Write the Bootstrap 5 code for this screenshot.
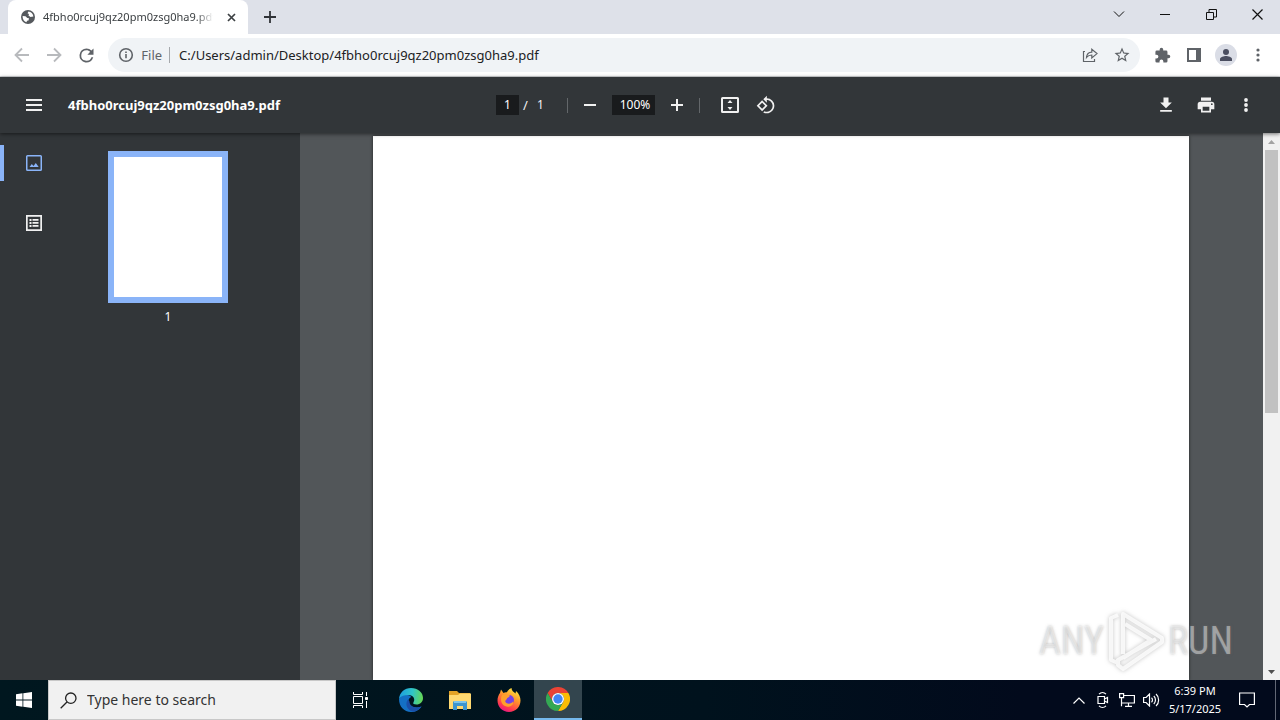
<!DOCTYPE html>
<html lang="en">
<head>
<meta charset="utf-8">
<meta name="viewport" content="width=device-width, initial-scale=1">
<title>4fbho0rcuj9qz20pm0zsg0ha9.pdf</title>
<link href="https://cdn.jsdelivr.net/npm/bootstrap@5.3.0/dist/css/bootstrap.min.css" rel="stylesheet">
<style>
  body { font-family: "Noto Sans", "Open Sans", sans-serif; font-size: 13px; line-height: 20px; background: #323639; }
  svg { display: block; flex: none; fill: currentColor; }
  .line { fill: none; stroke: currentColor; }
  .tool { display: flex; align-items: center; justify-content: center; flex: none; padding: 0; border: 0; border-radius: 0; background: none; color: inherit; }
  .w-tab { width: 240px; height: 34px; border-radius: 8px 8px 0 0; background: #fff; color: #3c4043; font-size: 11px; padding-left: 13px; }
  .tab-title { width: 174px; white-space: nowrap; -webkit-mask-image: linear-gradient(90deg, #000 88%, transparent 98%); mask-image: linear-gradient(90deg, #000 88%, transparent 98%); }
  .tab-close { width: 20px; height: 20px; margin-left: 4px; }
  .tab-new { width: 28px; color: #303338; }
  .tabstrip { background: #dee1e9; height: 34px; }
  .win { width: 46px; height: 28px; color: #111; }
  .chrome-bar { height: 43px; padding: 0 8px; gap: 4px; background: #fff; border-bottom: 1px solid #d5d7da; color: #5f6368; }
  .chrome-bar .tool { width: 28px; height: 28px; }
  .chrome-bar .faded { color: #b8babd; }
  .omnibox { height: 34px; border-radius: 17px; background: #f0f3f6; margin: 0 4px; }
  .omnibox input { border: 0; background: none; color: #202124; outline: 0; padding: 0; min-width: 0; }
  .file-label { border-right: 1px solid #a5a8ac; line-height: 16px; padding-right: 7px; margin-right: 9px; }
  .avatar { width: 22px; height: 22px; border-radius: 50%; background: #dadde6; color: #4a4e60; }
  .pdf-bar { display: grid; grid-template-columns: 1fr auto 1fr; align-items: center; height: 56px; background: #323639; color: #f1f1f1; box-shadow: 0 1px 4px rgba(0,0,0,.55); z-index: 2; position: relative; }
  .pdf-bar .tool { width: 36px; height: 36px; }
  .pdf-bar .wide { padding-right: 14px; }
  .pdf-bar .wide .tool { width: 40px; }
  .pdf-name { font-size: 13px; font-weight: 700; color: #fff; }
  .field { height: 20px; border: 0; padding: 0; background: #191b1d; color: #fff; text-align: center; font-size: 12px; outline: 0; }
  .page-field { width: 23px; }
  .zoom-field { width: 43px; padding-left: 3px; }
  .slash { width: 14px; }
  .page-total { width: 30px; font-size: 12px; }
  .rule { width: 1px; height: 15px; background: #63676a; }
  .rail { width: 68px; padding-top: 12px; gap: 24px; color: #f1f1f1; }
  .rail .tool { width: 68px; height: 36px; }
  .rail .active { color: #8ab4f8; border-left: 4px solid #8ab4f8; padding-right: 4px; border-radius: 0 3px 3px 0; }
  .side { width: 300px; background: #323639; color: #fff; }
  .thumbs { width: 200px; padding-top: 18px; font-size: 12px; }
  .thumb { width: 120px; height: 152px; border: 6px solid #8ab4f8; background: #fff; border-radius: 0; padding: 0; }
  .canvas-area { background: #525659; padding: 3px 1px 0 0; }
  .sheet { width: 816px; max-width: 100%; background: #fff; box-shadow: 0 0 3px rgba(0,0,0,.6); }
  .scroller { width: 17px; background: #f1f1f1; }
  .scroller .tool { width: 17px; height: 17px; }
  .thumb-bar { width: 13px; height: 48%; background: #c1c1c1; }
  .up { color: #a3a3a3; }
  .down { color: #505050; }
  .brand-mark { right: 47px; bottom: 6px; gap: 3px; height: 66px; color: rgba(255,255,255,.42); font: 400 38px/66px "Liberation Sans Narrow", "Roboto Condensed", sans-serif; text-shadow: 0 0 3px rgba(120,120,120,.5); }
  .brand-mark svg { color: rgba(255,255,255,.8); filter: drop-shadow(0 0 2px rgba(110,110,110,.5)); }
  .taskbar { height: 40px; background: linear-gradient(90deg, #00171f, #00121d 55%, #020a1c 80%); color: #fff; }
  .taskbar .tool { width: 48px; height: 40px; }
  .taskbar .tray .tool { width: 24px; }
  .taskbar .tray .notice { width: 40px; }
  .taskbar .running { background: #33454e; border-bottom: 2px solid #76b9ed; }
  .apps { gap: 1px; margin-left: 3px; }
  .search { width: 288px; height: 40px; background: #f1f1f1; border: 1px solid #c8c8c8; color: #222; padding-left: 11px; }
  .search input { border: 0; background: none; outline: 0; font-size: 14px; padding: 0; min-width: 0; margin-left: 10px; }
  .search input::placeholder { color: #333; opacity: 1; }
  .clock { width: 64px; font-size: 11px; line-height: 18px; }
  .desk-edge { width: 5px; height: 40px; border-left: 1px solid #626875; margin-left: 8px; }
</style>
</head>
<body class="d-flex flex-column vh-100 overflow-hidden">

<header>
  <div class="tabstrip d-flex">
    <div class="w-tab d-flex align-items-center ms-2 flex-shrink-0">
      <svg class="me-2" width="14" height="14" viewBox="0 0 14 14"><circle cx="7" cy="7" r="7" fill="#55595d"/><path fill="#fff" d="M1.600 6 4.500 6.300 6.300 8 8 8.300 7.500 10.500 6 10.800 5.500 12.200C3.300 11.600 1.400 9.500 1.600 6ZM7.500 1.600 6.500 3.200 8 4 7.500 5.600 9.500 7 12.400 6.500C12 3.600 10 1.700 7.500 1.600Z"/></svg>
      <span class="tab-title">4fbho0rcuj9qz20pm0zsg0ha9.pdf</span>
      <button class="tool tab-close" aria-label="Close tab"><svg class="line" width="9" height="9" viewBox="0 0 9 9" stroke-width="1.700"><path d="m1 1 7 7M8 1 1 8"/></svg></button>
    </div>
    <button class="tool tab-new ms-2" aria-label="New tab"><svg class="line" width="12" height="12" viewBox="0 0 12 12" stroke-width="1.800"><path d="M6 0v12M0 6h12"/></svg></button>
    <div class="d-flex ms-auto">
      <button class="tool win" aria-label="Search tabs"><svg class="line" width="12" height="8" viewBox="0 0 12 8"><path d="m1 1.500 5 5 5-5"/></svg></button>
      <button class="tool win" aria-label="Minimize"><svg width="10" height="1"><path d="M0 0h10v1H0z"/></svg></button>
      <button class="tool win" aria-label="Restore"><svg class="line" width="11" height="11" viewBox="0 0 11 11"><path d="M.5 3.500h7v7h-7zM3 3V.5h7.500V8H8"/></svg></button>
      <button class="tool win" aria-label="Close"><svg class="line" width="11" height="11" viewBox="0 0 11 11" stroke-width="1.200"><path d="m.5.5 10 10M10.500.5l-10 10"/></svg></button>
    </div>
  </div>

  <div class="chrome-bar d-flex align-items-center">
    <button class="tool faded" aria-label="Back"><svg class="line" width="16" height="16" viewBox="0 0 16 16" stroke-width="1.800"><path d="M15 8H2M8 1.500 1.500 8 8 14.500"/></svg></button>
    <button class="tool faded" aria-label="Forward"><svg class="line" width="16" height="16" viewBox="0 0 16 16" stroke-width="1.800"><path d="M1 8h13M8 1.500 14.500 8 8 14.500"/></svg></button>
    <button class="tool" aria-label="Reload"><svg width="21" height="21" viewBox="0 0 24 24"><path d="M17.650 6.350A7.960 7.960 0 0 0 12 4a8 8 0 1 0 7.730 10h-2.080A6 6 0 1 1 12 6c1.660 0 3.140.69 4.220 1.780L13 11h7V4z"/></svg></button>
    <div class="omnibox d-flex align-items-center flex-grow-1">
      <svg class="line ms-2" width="20" height="20" viewBox="0 0 20 20" stroke-width="1.600"><circle cx="10" cy="10" r="6.300"/><path d="M10 9v4.200M10 6.400V8" /></svg>
      <label for="url" class="file-label ms-1">&hairsp;File</label>
      <input id="url" class="flex-grow-1" value="C:/Users/admin/Desktop/4fbho0rcuj9qz20pm0zsg0ha9.pdf">
      <button class="tool me-1" aria-label="Share"><svg class="line" width="16" height="16" viewBox="0 0 16 16" stroke-width="1.200"><path d="M3 4.500H1.500v10h11V12M4.500 10.500C4.800 7 6.500 5.200 9.800 5.100V2.200L15 6.600 9.800 11V8C7.500 8 6 8.600 4.500 10.500Z"/></svg></button>
      <button class="tool me-1" aria-label="Bookmark"><svg width="18" height="18" viewBox="0 0 24 24"><path d="m22 9.240-7.190-.62L12 2 9.190 8.630 2 9.240l5.460 4.730L5.820 21 12 17.270 18.180 21l-1.630-7.030zM12 15.400l-3.760 2.270 1-4.280-3.320-2.880 4.380-.38L12 6.100l1.710 4.040 4.380.38-3.320 2.880 1 4.280z"/></svg></button>
    </div>
    <button class="tool" aria-label="Extensions"><svg width="17" height="17" viewBox="0 0 24 24"><path d="M20.500 11H19V7a2 2 0 0 0-2-2h-4V3.500a2.500 2.500 0 0 0-5 0V5H4a2 2 0 0 0-2 2v3.800h1.500a2.700 2.700 0 0 1 0 5.400H2V20a2 2 0 0 0 2 2h3.800v-1.500a2.700 2.700 0 0 1 5.400 0V22H17a2 2 0 0 0 2-2v-4h1.500a2.500 2.500 0 0 0 0-5"/></svg></button>
    <button class="tool" aria-label="Side panel"><svg width="14" height="14" viewBox="0 0 14 14"><path fill-rule="evenodd" d="M0 0h14v14H0zM2 2v10h7V2z"/></svg></button>
    <button class="tool" aria-label="Profile"><span class="avatar d-flex align-items-center justify-content-center"><svg width="12" height="12" viewBox="0 0 12 12"><circle cx="6" cy="3" r="3"/><path d="M0 12v-2c0-2 4-3 6-3s6 1 6 3v2z"/></svg></span></button>
    <button class="tool" aria-label="Menu"><svg width="4" height="14" viewBox="0 0 4 14"><circle cx="2" cy="2" r="1.600"/><circle cx="2" cy="7" r="1.600"/><circle cx="2" cy="12" r="1.600"/></svg></button>
  </div>
</header>

<div class="pdf-bar">
  <div class="d-flex align-items-center ps-3">
    <button class="tool" aria-label="Toggle sidebar"><svg width="16" height="12" viewBox="0 0 16 12"><path d="M0 0h16v2H0zM0 5h16v2H0zM0 10h16v2H0z"/></svg></button>
    <span class="pdf-name ms-3">4fbho0rcuj9qz20pm0zsg0ha9.pdf</span>
  </div>
  <div class="d-flex align-items-center">
    <input class="field page-field" value="1" aria-label="Page number">
    <span class="slash ms-1">/</span><span class="page-total">1</span>
    <span class="rule"></span>
    <button class="tool ms-1" aria-label="Zoom out"><svg width="12" height="2"><path d="M0 0h12v2H0z"/></svg></button>
    <input class="field zoom-field mx-1" value="100%" aria-label="Zoom level">
    <button class="tool me-1" aria-label="Zoom in"><svg width="12" height="12"><path d="M5 0h2v5h5v2H7v5H5V7H0V5h5z"/></svg></button>
    <span class="rule me-2"></span>
    <button class="tool ms-1" aria-label="Fit to page"><svg width="18" height="16" viewBox="0 0 18 16"><path fill-rule="evenodd" d="M1.500 0h15A1.500 1.500 0 0 1 18 1.500v13a1.500 1.500 0 0 1-1.500 1.500h-15A1.500 1.500 0 0 1 0 14.500v-13A1.500 1.500 0 0 1 1.500 0ZM2 2v12h14V2Zm7 1 2.500 3h-5Zm0 10-2.500-3h5Z"/></svg></button>
    <button class="tool" aria-label="Rotate"><svg width="20" height="20" viewBox="0 0 24 24"><path fill-rule="evenodd" d="M7.340 6.410.86 12.900l6.490 6.480 6.490-6.480zM3.690 12.900l3.660-3.660L11 12.900l-3.660 3.660zm15.670-6.260A8.950 8.950 0 0 0 13 4V.76L8.760 5 13 9.240V6c1.790 0 3.580.68 4.950 2.050a7.007 7.007 0 0 1 0 9.900 6.973 6.973 0 0 1-7.790 1.440l-1.490 1.490a8.990 8.990 0 0 0 10.690-14.240"/></svg></button>
  </div>
  <div class="wide d-flex justify-content-end">
    <button class="tool" aria-label="Download"><svg width="20" height="20" viewBox="0 0 24 24"><path d="M19 9h-4V3H9v6H5l7 7zM5 18v2h14v-2z"/></svg></button>
    <button class="tool" aria-label="Print"><svg width="20" height="20" viewBox="0 0 24 24"><path d="M19 8H5a3 3 0 0 0-3 3v6h4v4h12v-4h4v-6a3 3 0 0 0-3-3m-3 11H8v-5h8zm3-7a1 1 0 1 1 0-2 1 1 0 0 1 0 2m-1-9H6v4h12z"/></svg></button>
    <button class="tool" aria-label="More"><svg width="4" height="14" viewBox="0 0 4 14"><circle cx="2" cy="2" r="1.900"/><circle cx="2" cy="7" r="1.900"/><circle cx="2" cy="12" r="1.900"/></svg></button>
  </div>
</div>

<main class="d-flex flex-grow-1 position-relative overflow-hidden">
  <aside class="side d-flex flex-shrink-0">
    <nav class="rail d-flex flex-column">
      <button class="tool active" aria-label="Thumbnails"><svg width="16" height="16" viewBox="0 0 16 16"><path fill-rule="evenodd" d="M1.500 0h13A1.500 1.500 0 0 1 16 1.500v13a1.500 1.500 0 0 1-1.500 1.500h-13A1.500 1.500 0 0 1 0 14.500v-13A1.500 1.500 0 0 1 1.500 0Zm0 1.500v13h13v-13Zm2 10.500 2.300-3 1.700 2 2.300-3 2.900 4Z"/></svg></button>
      <button class="tool" aria-label="Outline"><svg width="16" height="16" viewBox="0 0 16 16"><path fill-rule="evenodd" d="M0 0h16v16H0ZM1.700 1.700v12.600h12.600V1.700ZM3.500 4h2v2h-2Zm3 0h6v1.700h-6Zm-3 3h2v2h-2Zm3 0h6v1.700h-6Zm-3 3h2v2h-2Zm3 0h6v1.700h-6Z"/></svg></button>
    </nav>
    <div class="thumbs d-flex flex-column align-items-center">
      <button class="thumb" aria-label="Page 1"></button>
      <span class="mt-1">1</span>
    </div>
  </aside>
  <section class="canvas-area d-flex justify-content-center flex-grow-1"><div class="sheet"></div></section>
  <div class="scroller d-flex flex-column align-items-center flex-shrink-0">
    <button class="tool up" aria-label="Scroll up"><svg width="7" height="4"><path d="M0 4 3.500 0 7 4z"/></svg></button>
    <div class="thumb-bar"></div>
    <button class="tool down mt-auto" aria-label="Scroll down"><svg width="7" height="4"><path d="M0 0h7L3.500 4z"/></svg></button>
  </div>
  <div class="brand-mark position-absolute d-flex align-items-center">
    <span>ANY</span>
    <svg class="line" width="58" height="66" viewBox="0 0 58 66" stroke-width="4" stroke-linejoin="round"><path d="M11 7 4 10v42l7 3v-4M16 46V6l39 24v4L16 61l-5-4v-5l38-21M18 16l26 16-28 18"/></svg>
    <span>RUN</span>
  </div>
</main>

<footer class="taskbar d-flex align-items-center flex-shrink-0">
  <button class="tool" aria-label="Start"><svg width="16" height="16" viewBox="0 0 16 16"><path d="M0 2.300 6.500 1.300v6.300H0ZM7.300 1.200 16 0v7.600H7.300ZM0 8.400h6.500v6.300L0 13.700ZM7.300 8.400H16V16l-8.700-1.200Z"/></svg></button>
  <label class="search d-flex align-items-center">
    <svg class="line" width="17" height="17" viewBox="0 0 17 17" stroke-width="1.300"><circle cx="10.800" cy="6.200" r="5.200"/><path d="m7 10-6.300 6.300"/></svg>
    <input class="flex-grow-1" placeholder="Type here to search" aria-label="Search">
  </label>
  <button class="tool" aria-label="Task view"><svg class="line" width="17" height="16" viewBox="0 0 17 16"><path d="M1.500 0v2.500h9V0M1.500 16v-2.500h9V16M1.500 4.500h9v7h-9zM14.500 0v4M14.500 9v7"/><path fill="currentColor" d="M13.500 5.500h2v2h-2z"/></svg></button>
  <div class="apps d-flex">
    <button class="tool" aria-label="Edge"><svg width="24" height="24" viewBox="0 0 24 24"><defs><linearGradient id="eg" x1="0" y1=".3" x2="1" y2=".4"><stop offset="0" stop-color="#1c9de0"/><stop offset=".55" stop-color="#30c5c8"/><stop offset="1" stop-color="#65d755"/></linearGradient></defs><path fill="#1470c4" d="M0 11C2 6 9 5.500 12.500 9 9 10 8.500 14 11 17c3 3 8 3 11.500 1.500C20.500 22 16.500 24 12 24 5 24 0 18.500 0 11Z"/><path fill="url(#eg)" d="M0 11C.5 4.500 5.500 0 12 0c7 0 12 4.500 12 10 0 4-3 6.500-6.500 6.500-2.500 0-4-1-3-2.300 2-2.700 0-7.200-5-7.200-5 0-8 1.500-9.500 4Z"/><path fill="#1a4fa8" d="M9 11.500c-3.500 4-1 11 5 12.200 3.500-.3 6.500-2.300 8.500-5.200-6 2.500-12 0-12-5Z"/></svg></button>
    <button class="tool" aria-label="File Explorer"><svg width="22" height="19" viewBox="0 0 22 19"><path fill="#e3a326" d="M0 0h8l2 2h11v4H0Z"/><path fill="#ffd971" d="M0 4h9l2-1.500h11V18H0Z"/><path fill="#3c95cf" d="M4 19v-8l1-1h12l1 1v8h-4v-4H8v4Z"/><path fill="#7cc5ec" d="M5 10h12v2H5Z"/></svg></button>
    <button class="tool" aria-label="Firefox"><svg width="24" height="24" viewBox="0 0 24 24"><defs><linearGradient id="fg" x1=".8" y1="0" x2=".3" y2="1"><stop offset="0" stop-color="#fff044"/><stop offset=".4" stop-color="#ff9a2a"/><stop offset=".8" stop-color="#ff3850"/><stop offset="1" stop-color="#e31587"/></linearGradient></defs><path fill="url(#fg)" d="M3 5 4 1.500 6.500 5C7.500 4.300 8.500 4 10 4.200 11 2 12.500 1 14.500 0c0 2.500 2 4 4 5.500L19 3c3 2.500 4.500 6 4.500 9.500C23.500 19 18.500 24 12 24S.5 19 .5 12.500C.5 9.500 1.500 7 3 5Z"/><circle cx="12" cy="12" r="5" fill="#7542e5"/><path fill="#ffa02c" d="M5 7c3-1.500 5 0 8 .5-.5 2-3 2-3 3 0 1.500-2.500 1.500-1.500 3.500 1.500 2.500 6 2 7.500-.5 1 4-4 6.500-8 4.500-4-2-5-6.500-3-11Z"/></svg></button>
    <button class="tool running" aria-label="Chrome"><svg width="24" height="24" viewBox="0 0 24 24"><path fill="#ea4335" d="M1.600 6A12 12 0 0 1 22.400 6H12a6 6 0 0 0-5.200 9Z"/><path fill="#fbbc04" d="M22.400 6A12 12 0 0 1 12 24l5.200-9A6 6 0 0 0 12 6Z"/><path fill="#34a853" d="M12 24A12 12 0 0 1 1.600 6l5.200 9a6 6 0 0 0 10.400 0Z"/><circle cx="12" cy="12" r="6" fill="#fff"/><circle cx="12" cy="12" r="4.700" fill="#4285f4"/></svg></button>
  </div>
  <div class="tray d-flex align-items-center ms-auto">
    <button class="tool" aria-label="Hidden icons"><svg class="line" width="12" height="7" viewBox="0 0 12 7" stroke-width="1.200"><path d="m.5 6.500 5.500-5.500 5.500 5.500"/></svg></button>
    <button class="tool" aria-label="Meet now"><svg class="line" width="12" height="16" viewBox="0 0 12 16" stroke-width="1.200"><path d="M1 4.500h6.500v7H1zM7.500 7l3-1.500v5l-3-1.500M2 2.200C4 .2 7 .2 9 2.200M2 13.800c2 2 5 2 7 0"/></svg></button>
    <button class="tool" aria-label="Network"><svg class="line" width="16" height="14" viewBox="0 0 16 14" stroke-width="1.200"><path d="M5 2.500h10.400v7.500H4.500M.6.600h4v4h-4zM2.500 4.500v8.800M2.500 10h2M9.500 10v3M6 13.300h7"/></svg></button>
    <button class="tool" aria-label="Volume"><svg class="line" width="17" height="14" viewBox="0 0 17 14" stroke-width="1.200"><path d="M.6 4.500h2.500L6.500 1v12L3.100 9.500H.6ZM8.500 4.800c1.300 1.200 1.300 3.200 0 4.400M10.800 3c2.200 2 2.200 6 0 8M13 1c3.500 3 3.500 9 0 12"/></svg></button>
    <div class="clock text-center">6:39 PM<br>5/17/2025</div>
    <button class="tool notice" aria-label="Notifications"><svg class="line" width="16" height="16" viewBox="0 0 16 16" stroke-width="1.200"><path d="M.6 1h14.800v11.500h-4.900L8 15l-2.500-2.500H.6Z"/></svg></button>
    <div class="desk-edge"></div>
  </div>
</footer>
<script src="https://cdn.jsdelivr.net/npm/bootstrap@5.3.0/dist/js/bootstrap.bundle.min.js"></script>
</body>
</html>
